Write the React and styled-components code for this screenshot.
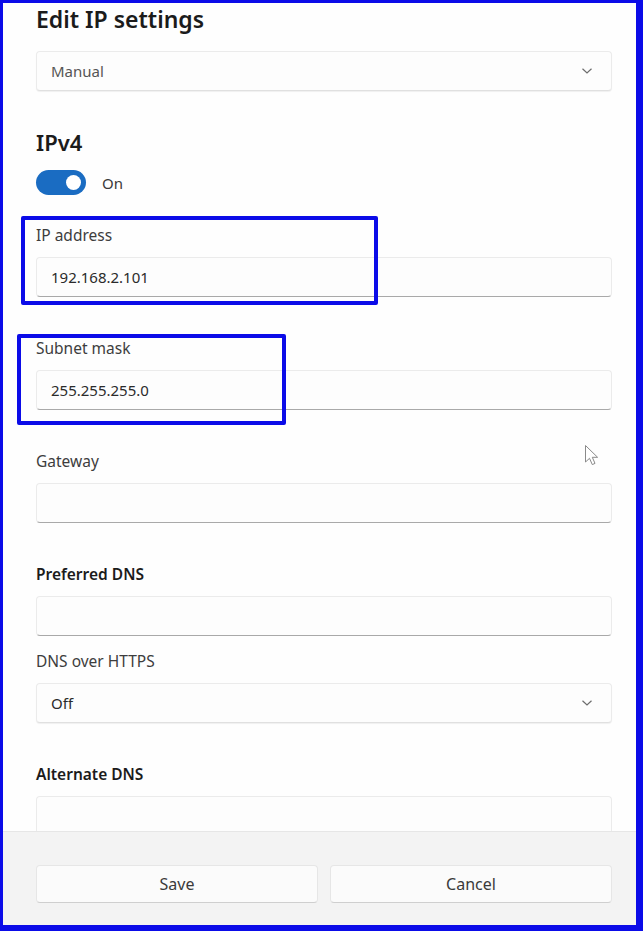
import styled, { createGlobalStyle } from 'styled-components'

const GlobalStyle = createGlobalStyle`
body {
    margin: 0;
    background: #ffffff;
    font-family: 'Noto Sans', 'Liberation Sans', sans-serif;
}
`

const Frame = styled.div`
position: relative;
box-sizing: border-box;
width: 643px;
height: 931px;
display: flex;
flex-direction: column;
border-style: solid;
border-color: #0b0be8;
border-width: 3px 7px 6px 3px;
background: #ffffff;
overflow: hidden;
`

const Content = styled.div`
flex: 1;
min-height: 0;
display: flex;
flex-direction: column;
padding: 0 24px 0 33px;
overflow: hidden;
background: #fefefe;
& > * {
    flex-shrink: 0;
}
`

const Title = styled.h1`
margin: 0;
height: 32px;
font-size: 23px;
line-height: 32px;
font-weight: 600;
color: #1b1b1b;
`

const Heading = styled.h2`
margin: 35px 0 0;
height: 32px;
font-size: 22px;
line-height: 32px;
font-weight: 600;
color: #1b1b1b;
`

const Box = styled.div`
box-sizing: border-box;
flex-shrink: 0;
height: 40px;
display: flex;
align-items: center;
justify-content: space-between;
padding: 0 18px 0 14px;
margin-top: ${p => p.$top || 12}px;
background: #fdfdfd;
border: 1px solid #ebebeb;
border-bottom-color: ${p => p.$select ? '#e0e0e0' : '#a9a9a9'};
border-radius: 4px;
box-shadow: ${p => p.$select ? '0 1px 1px rgba(0,0,0,0.06)' : 'none'};
font-size: 15px;
color: #2b2b2b;
`

const SelectText = styled.span`
color: #555555;
`

const ToggleRow = styled.div`
display: flex;
align-items: center;
gap: 16px;
margin-top: 12px;
height: 25px;
font-size: 15px;
color: #3a3a3a;
`

const Switch = styled.div`
box-sizing: border-box;
width: 50px;
height: 25px;
border-radius: 13px;
background: #1a6cc2;
display: flex;
align-items: center;
justify-content: flex-end;
padding-right: 5px;
&::after {
    content: '';
    width: 15px;
    height: 15px;
    border-radius: 50%;
    background: #ffffff;
}
`

const Field = styled.div`
position: relative;
display: flex;
flex-direction: column;
margin-top: ${p => p.$top}px;
`

const Label = styled.div`
height: 20px;
line-height: 20px;
font-size: 15.5px;
font-weight: ${p => p.$strong ? 600 : 400};
color: ${p => p.$strong ? '#1b1b1b' : '#3d3d3d'};
`

const Highlight = styled.div`
position: absolute;
box-sizing: border-box;
left: ${p => p.$left}px;
top: ${p => p.$top}px;
width: ${p => p.$width}px;
height: ${p => p.$height}px;
border: 4px solid #0b0be8;
border-radius: 2px;
`

const Footer = styled.div`
box-sizing: border-box;
flex-shrink: 0;
height: 94px;
display: grid;
grid-template-columns: 1fr 1fr;
gap: 12px;
padding: 33px 24px 22px 33px;
background: #f3f3f3;
border-top: 1px solid #e6e6e6;
`

const Button = styled.button`
height: 38px;
background: #fbfbfb;
border: 1px solid #e6e6e6;
border-bottom-color: #cfcfcf;
border-radius: 4px;
font-family: inherit;
font-size: 16px;
color: #3a3a3a;
`

const Pointer = styled.svg`
position: absolute;
left: 579px;
top: 439px;
`

const Chevron = () => (
    <svg width="12" height="8" viewBox="0 0 12 8">
        <path d="M1.5 1.8 L6 6 L10.5 1.8" fill="none" stroke="#6d6d6d" strokeWidth="1.2" />
    </svg>
)

const App = () => {
    return (
        <>
            <GlobalStyle />
            <Frame>
                <Content>
                    <Title>Edit IP settings</Title>
                    <Box $select $top={16}>
                        <SelectText>Manual</SelectText>
                        <Chevron />
                    </Box>
                    <Heading>IPv4</Heading>
                    <ToggleRow>
                        <Switch />
                        <span>On</span>
                    </ToggleRow>
                    <Field $top={30}>
                        <Highlight $left={-15} $top={-9} $width={357} $height={89} />
                        <Label>IP address</Label>
                        <Box>192.168.2.101</Box>
                    </Field>
                    <Field $top={41}>
                        <Highlight $left={-19} $top={-4} $width={269} $height={91} />
                        <Label>Subnet mask</Label>
                        <Box>255.255.255.0</Box>
                    </Field>
                    <Field $top={41}>
                        <Label>Gateway</Label>
                        <Box />
                    </Field>
                    <Field $top={41}>
                        <Label $strong>Preferred DNS</Label>
                        <Box />
                    </Field>
                    <Field $top={15}>
                        <Label>DNS over HTTPS</Label>
                        <Box $select>
                            <span>Off</span>
                            <Chevron />
                        </Box>
                    </Field>
                    <Field $top={41}>
                        <Label $strong>Alternate DNS</Label>
                        <Box />
                    </Field>
                </Content>
                <Footer>
                    <Button>Save</Button>
                    <Button>Cancel</Button>
                </Footer>
                <Pointer width="20" height="26" viewBox="0 0 20 26">
                    <path d="M3.5 3.5 L3.5 20 L7.5 16.3 L10.3 22.6 L13 21.4 L10.3 15.3 L15.6 15.3 Z" fill="#ffffff" stroke="#8a8a8a" strokeWidth="1" strokeLinejoin="round" />
                </Pointer>
            </Frame>
        </>
    )
}

export default App
